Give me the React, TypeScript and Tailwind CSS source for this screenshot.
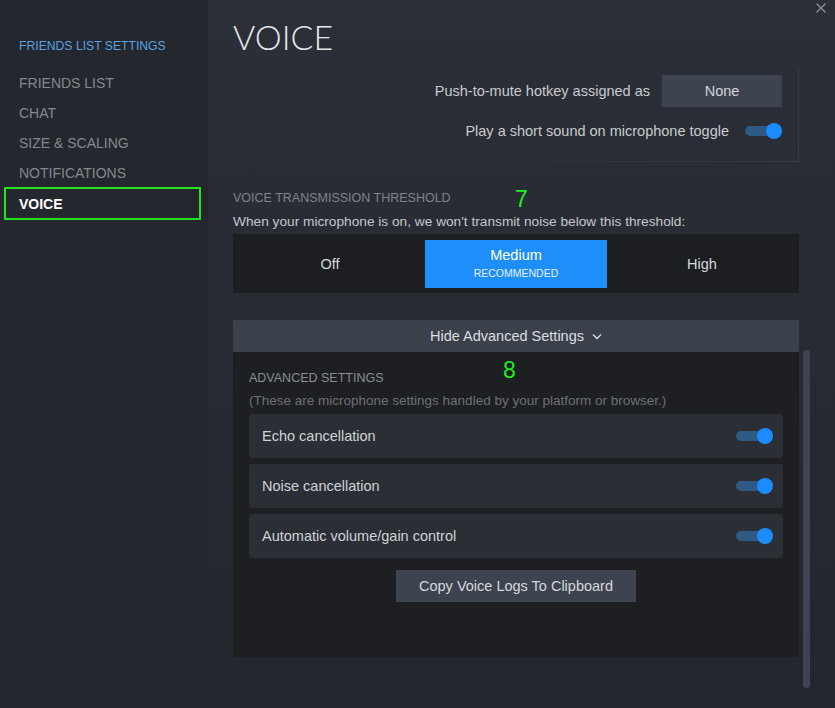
import React from 'react';

const sidebarItems = ['FRIENDS LIST', 'CHAT', 'SIZE & SCALING', 'NOTIFICATIONS'];

const advancedRows = ['Echo cancellation', 'Noise cancellation', 'Automatic volume/gain control'];

const Toggle: React.FC = () => (
  <div className="relative w-[37px] h-[16px] shrink-0">
    <div className="absolute left-0 top-[3px] w-[30px] h-[10px] rounded-full bg-[#2f5a83]" />
    <div className="absolute right-0 top-0 w-[16px] h-[16px] rounded-full bg-[#1a8cff]" />
  </div>
);

const App: React.FC = () => {
  return (
    <div className="flex w-[835px] h-[708px] overflow-hidden font-['Liberation_Sans',Arial,sans-serif] text-[#c9cbce]">
      {/* sidebar */}
      <aside className="w-[208px] shrink-0 bg-[#24272d] pt-[38px]">
        <div className="px-[19px] text-[12.2px] leading-4 text-[#5aa1e0]">FRIENDS LIST SETTINGS</div>
        <nav className="mt-[14px] flex flex-col">
          {sidebarItems.map((item) => (
            <div key={item} className="h-[30px] flex items-center pl-[19px] pt-px text-[14px] text-[#84878c]">
              {item}
            </div>
          ))}
          <div className="mt-[-1px] mx-[4px] w-[197px] h-[33px] border-2 border-[#22e122] flex items-center pl-[13px] pt-px text-[14px] font-bold text-white">
            VOICE
          </div>
        </nav>
      </aside>

      {/* main */}
      <main className="flex-1 flex bg-gradient-to-b from-[#2b2f37] via-[#272a32] to-[#23262d]">
        <div className="ml-[25px] w-[566px] shrink-0 flex flex-col">
          <h1 className="pt-[17px] text-[34px] leading-[40px] font-light font-['Lato',sans-serif] text-[#e6e7e9]">VOICE</h1>

          <div className="mt-[11px] ml-auto w-[379px] flex flex-col">
            <div className="border-r border-[#363a43] flex flex-col items-end gap-[12px] pt-[7px] pb-[18px] pr-[16px]">
              <div className="flex items-center gap-[12px]">
                <span className="text-[14.5px] pt-[2px]">Push-to-mute hotkey assigned as</span>
                <div className="w-[120px] h-[32px] bg-[#3d4450] flex items-center justify-center pt-px text-[14.5px] text-[#d3d5d8]">None</div>
              </div>
              <div className="h-[24px] flex items-center gap-[16px]">
                <span className="text-[14.5px] pt-[2px]">Play a short sound on microphone toggle</span>
                <Toggle />
              </div>
            </div>
            <div className="h-px bg-gradient-to-r from-transparent to-[#383c45]" />
          </div>

          <div className="relative mt-[29px] text-[12.5px] leading-[15px] text-[#7f8388]">
            VOICE TRANSMISSION THRESHOLD
            <span className="absolute left-[282px] top-[-3px] text-[23px] leading-[23px] text-[#22ee22]">7</span>
          </div>
          <p className="mt-[7px] text-[13.7px] leading-[18px] text-[#c5c7ca]">
            When your microphone is on, we won't transmit noise below this threshold:
          </p>

          <div className="mt-[3px] h-[59px] bg-[#1c1e22] pt-[6px] pb-[5px] px-[6px] grid grid-cols-3 gap-[4px]">
            <div className="flex items-center justify-center pt-px text-[14.5px] text-[#d6d8da]">Off</div>
            <div className="bg-[#1e8ffa] flex flex-col items-center justify-center text-white">
              <span className="text-[14.5px] leading-[19px]">Medium</span>
              <span className="text-[10.5px] leading-[17px] text-[#e4f0ff]">RECOMMENDED</span>
            </div>
            <div className="flex items-center justify-center pt-px text-[14.5px] text-[#d6d8da]">High</div>
          </div>

          <div className="mt-[27px] h-[32px] bg-[#3b414b] flex items-center justify-center gap-[8px] pt-px text-[14.5px] text-[#dcdee0]">
            Hide Advanced Settings
            <svg width="10" height="7" viewBox="0 0 10 7" fill="none" stroke="#dcdee0" strokeWidth="1.4">
              <path d="M1 1.5 L5 5.5 L9 1.5" />
            </svg>
          </div>

          <div className="relative h-[305px] bg-[#1d1f23] px-[16px] pt-[19px] flex flex-col">
            <span className="absolute left-[270px] top-[7px] text-[23px] leading-[23px] text-[#22ee22]">8</span>
            <div className="text-[12.5px] leading-[15px] text-[#8a8e93]">ADVANCED SETTINGS</div>
            <div className="mt-[7px] text-[13.5px] leading-[16px] text-[#6c7077]">
              (These are microphone settings handled by your platform or browser.)
            </div>
            <div className="mt-[5px] flex flex-col gap-[6px]">
              {advancedRows.map((row) => (
                <div key={row} className="h-[44px] rounded-[3px] bg-[#2b2e35] flex items-center justify-between pl-[13px] pr-[10px]">
                  <span className="text-[14.5px] pt-[2px] text-[#d0d2d5]">{row}</span>
                  <Toggle />
                </div>
              ))}
            </div>
            <div className="mt-[12px] self-center w-[240px] h-[32px] bg-[#3d4450] flex items-center justify-center pt-px text-[14.5px] text-[#d6d8db]">
              Copy Voice Logs To Clipboard
            </div>
          </div>
        </div>

        {/* scrollbar */}
        <div className="ml-[4px] mt-[350px] w-[7px] h-[338px] rounded-full bg-[#3e4552] shrink-0" />

        {/* close */}
        <div className="ml-[6px] mt-[3px] shrink-0">
          <svg width="10" height="10" viewBox="0 0 10 10" stroke="#8e9196" strokeWidth="1.3">
            <path d="M0.5 0.5 L9.5 9.5 M9.5 0.5 L0.5 9.5" />
          </svg>
        </div>
      </main>
    </div>
  );
};

export default App;
